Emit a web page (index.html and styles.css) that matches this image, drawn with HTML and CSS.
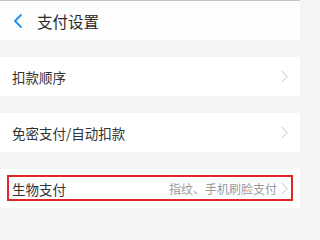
FILE: index.html
```html
<!DOCTYPE html>
<html lang="zh">
<head>
<meta charset="utf-8">
<link rel="stylesheet" href="styles.css">
</head>
<body>
<div class="page">
  <header class="topbar">
    <svg class="back" width="10" height="14" viewBox="0 0 10 14"><path d="M8 1 L2 7 L8 13" fill="none" stroke="#1f8ff2" stroke-width="1.8" stroke-linecap="round" stroke-linejoin="round"/></svg>
    <span class="title">支付设置</span>
  </header>
  <div class="gap"></div>
  <div class="row"><span class="label">扣款顺序</span><svg class="chev" width="7" height="13" viewBox="0 0 7 13"><path d="M1 1 L6 6.5 L1 12" fill="none" stroke="#c6c6c6" stroke-width="1"/></svg></div>
  <div class="gap"></div>
  <div class="row"><span class="label">免密支付/自动扣款</span><svg class="chev" width="7" height="13" viewBox="0 0 7 13"><path d="M1 1 L6 6.5 L1 12" fill="none" stroke="#c6c6c6" stroke-width="1"/></svg></div>
  <div class="gap"></div>
  <div class="row"><span class="label">生物支付</span><span class="sub">指纹、手机刷脸支付</span><svg class="chev" width="7" height="13" viewBox="0 0 7 13"><path d="M1 1 L6 6.5 L1 12" fill="none" stroke="#c6c6c6" stroke-width="1"/></svg><div class="mark"></div></div>
</div>
</body>
</html>
```
FILE: styles.css
```css
html, body { margin: 0; padding: 0; }
body { background: #f4f4f4; font-family: "Noto Sans CJK SC", "Noto Sans", sans-serif; }
.page { display: flex; flex-direction: column; width: 300px; }
.topbar { height: 39px; background: #fdfdfd; border-top: 1px solid #c4c4c4; display: flex; align-items: center; padding-left: 13px; }
.back { display: block; margin-right: 14px; }
.title { font-size: 15.5px; color: #2a2a2a; }
.gap { height: 17px; }
.row { position: relative; height: 39px; background: #fff; display: flex; align-items: center; padding: 0 12px 0 12px; }
.label { font-size: 13.5px; color: #333; flex: 1; }
.sub { font-size: 12px; color: #999; margin-right: 4px; }
.chev { display: block; }
.mark { position: absolute; left: 7px; right: 7px; top: 6px; height: 22px; border: 2px solid #e3262b; }
```
